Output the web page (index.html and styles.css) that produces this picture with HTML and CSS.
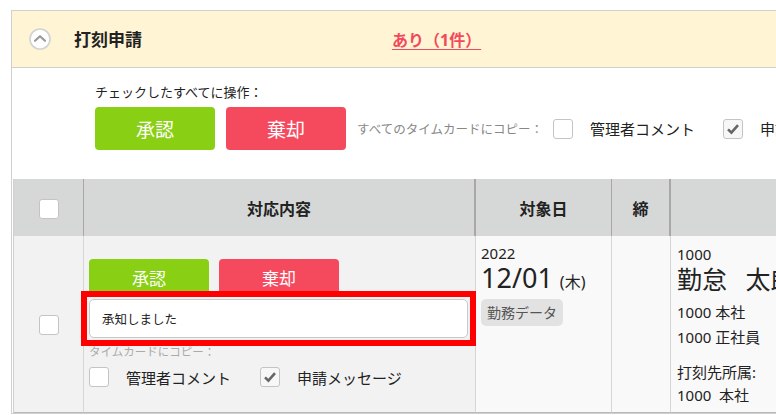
FILE: index.html
```html
<!DOCTYPE html>
<html lang="ja">
  <head>
    <meta charset="utf-8" />
    <title>打刻申請</title>
    <meta name="viewport" content="width=device-width, initial-scale=1" />
    <link rel="stylesheet" href="styles.css">
  </head>
  <body>
    <div class="panel">
      <div class="panel-head">
        <span class="toggle">
          <svg width="22" height="22" viewBox="0 0 22 22">
            <circle cx="11" cy="11" r="10" fill="#fff" stroke="#d2d2d2" stroke-width="1.6" />
            <path d="M6 12.8 L11 8.2 L16 12.8" fill="none" stroke="#9a9a9a" stroke-width="2.2" stroke-linecap="round" stroke-linejoin="round" />
          </svg>
        </span>
        <h2 class="panel-title">打刻申請</h2>
        <a class="panel-status" href="#">あり（1件）</a>
      </div>

      <div class="panel-body">
        <div class="bulk">
          <div class="bulk-label">チェックしたすべてに操作：</div>
          <div class="bulk-actions">
            <button class="btn btn-approve">承認</button>
            <button class="btn btn-reject">棄却</button>
            <span class="copy-label">すべてのタイムカードにコピー：</span>
            <label class="opt"><span class="check"></span>管理者コメント</label>
            <label class="opt">
              <span class="check is-on">
                <svg width="14" height="14" viewBox="0 0 14 14"><path d="M2 7.4 L5.4 10.6 L12 3.2" fill="none" stroke="#666" stroke-width="2.6" /></svg>
              </span>申請メッセージ
            </label>
          </div>
        </div>

        <table class="list">
          <thead>
            <tr>
              <th class="col-check"><span class="check"></span></th>
              <th class="col-action">対応内容</th>
              <th class="col-date">対象日</th>
              <th class="col-close">締</th>
              <th class="col-staff"></th>
            </tr>
          </thead>
          <tbody>
            <tr>
              <td class="col-check"><span class="check"></span></td>
              <td class="col-action">
                <div class="row-actions">
                  <button class="btn btn-sm btn-approve">承認</button>
                  <button class="btn btn-sm btn-reject">棄却</button>
                </div>
                <div class="memo">
                  <input class="memo-input" type="text" value="承知しました" />
                </div>
                <div class="copy-note">タイムカードにコピー：</div>
                <div class="row-opts">
                  <label class="opt"><span class="check"></span>管理者コメント</label>
                  <label class="opt">
                    <span class="check is-on">
                      <svg width="14" height="14" viewBox="0 0 14 14"><path d="M2 7.4 L5.4 10.6 L12 3.2" fill="none" stroke="#666" stroke-width="2.6" /></svg>
                    </span>申請メッセージ
                  </label>
                </div>
              </td>
              <td class="col-date">
                <div class="date-year">2022</div>
                <div class="date-day">12/01 <small>(木)</small></div>
                <span class="tag">勤務データ</span>
              </td>
              <td class="col-close"></td>
              <td class="col-staff">
                <div class="staff-code">1000</div>
                <div class="staff-name">勤怠 太郎</div>
                <div class="staff-affil">
                  <div>1000 本社</div>
                  <div>1000 正社員</div>
                </div>
                <div class="staff-dest">
                  <div>打刻先所属:</div>
                  <div>1000&nbsp;&nbsp;本社</div>
                </div>
              </td>
            </tr>
          </tbody>
        </table>
      </div>
    </div>
  </body>
</html>
```

FILE: styles.css
```css
* {
  box-sizing: border-box;
}
body {
  margin: 0;
  background: #fff;
  color: #222;
  font-family: "Noto Sans", "Noto Sans CJK JP", sans-serif;
  overflow: hidden;
}

.panel {
  margin: 10px 0 0 11px;
  width: 1000px;
  border: 1px solid #d0d0d0;
  border-right: 0;
}
.panel-head {
  display: flex;
  align-items: center;
  height: 57px;
  padding-left: 17px;
  background: #fff4d3;
  border-bottom: 1px solid #d0d0d0;
}
.toggle svg {
  display: block;
}
.panel-title {
  margin: 0 0 0 23px;
  width: 318px;
  font-size: 17px;
  font-weight: bold;
  line-height: 1;
}
.panel-status {
  color: #f2495c;
  font-size: 16px;
  font-weight: bold;
  text-underline-offset: 3px;
}

/* bulk toolbar */
.bulk {
  padding: 14px 0 0 83px;
}
.bulk-label {
  font-size: 13px;
  line-height: 20px;
}
.bulk-actions {
  display: flex;
  align-items: center;
  margin-top: 5px;
  white-space: nowrap;
}
.btn {
  width: 120px;
  height: 43px;
  border: 0;
  border-radius: 4px;
  color: #fff;
  font-family: inherit;
  font-size: 19px;
  padding: 0;
}
.btn + .btn {
  margin-left: 11px;
}
.btn-approve {
  background: #89cf13;
}
.btn-reject {
  background: #f5495e;
}
.copy-label {
  margin-left: 11px;
  color: #888;
  font-size: 12.5px;
}
.bulk-actions .opt {
  margin-left: 10px;
}
.bulk-actions .opt + .opt {
  margin-left: 28px;
}

.opt {
  display: flex;
  align-items: center;
  font-size: 15px;
  color: #222;
}
.opt .check {
  margin-right: 17px;
}
.check {
  display: inline-flex;
  align-items: center;
  justify-content: center;
  width: 20px;
  height: 20px;
  border: 1px solid #c4c4c4;
  border-radius: 3px;
  background: #fff;
  vertical-align: middle;
}
.check.is-on {
  background: #f7f7f7;
}
.check svg {
  display: block;
}

/* list */
.list {
  margin: 29px 0 0 1px;
  width: 998px;
  border-collapse: separate;
  border-spacing: 0;
  table-layout: fixed;
  border-left: 1px solid #d0d0d0;
}
.list th {
  height: 57px;
  padding: 0;
  background: #d6d8d7;
  border-right: 1px solid #a8a8a8;
  font-size: 16px;
  font-weight: bold;
  color: #222;
  vertical-align: middle;
}
.list th.col-action,
.list th.col-close {
  border-right-width: 2px;
}
.col-check {
  width: 70px;
}
.col-action {
  width: 392px;
}
.col-date {
  width: 136px;
}
.col-close {
  width: 59px;
}
.list td {
  height: 177px;
  padding: 0;
  background: #f9f9f9;
  border-right: 1px solid #d6d6d6;
  border-bottom: 1px solid #b8b8b8;
  vertical-align: top;
}
.list td.col-check,
.list td.col-action {
  background: #f2f2f2;
}
.list td.col-check {
  text-align: center;
  vertical-align: middle;
}

.list td.col-action {
  padding: 23px 7px 0 5px;
}
.row-actions {
  display: flex;
}
.btn-sm {
  height: 36px;
  font-size: 17px;
}
.row-actions .btn + .btn {
  margin-left: 10px;
}
.memo {
  position: relative;
  z-index: 1;
  margin: 2px -2px 0;
  padding: 2px;
  outline: 6px solid #ff0000;
}
.memo-input {
  display: block;
  width: 100%;
  height: 39px;
  padding: 0 12px;
  border: 1px solid #c9c9c9;
  border-radius: 5px;
  background: #fff;
  color: #222;
  font-family: inherit;
  font-size: 12.5px;
}
.copy-note {
  margin-top: 3px;
  font-size: 11.5px;
  line-height: 18px;
  color: #aaa;
}
.row-opts {
  display: flex;
  align-items: center;
  height: 24px;
  margin-top: 4px;
}
.row-opts .opt + .opt {
  margin-left: 29px;
}

.list td.col-date {
  padding: 8px 5px 0;
}
.date-year {
  font-size: 15px;
  line-height: 18px;
}
.date-day {
  font-size: 27px;
  line-height: 32px;
}
.date-day small {
  font-size: 16px;
}
.tag {
  display: inline-block;
  margin-top: 1px;
  height: 27px;
  padding: 0 6px;
  border-radius: 5px;
  background: #e2e2e2;
  color: #555;
  font-size: 14px;
  line-height: 27px;
}

.list td.col-staff {
  padding: 8px 6px 0;
  font-size: 15px;
}
.staff-code {
  line-height: 20px;
}
.staff-name {
  font-size: 25px;
  line-height: 30px;
  word-spacing: 12px;
  white-space: nowrap;
}
.staff-affil {
  margin-top: 6px;
  line-height: 25px;
}
.staff-dest {
  margin-top: 11px;
  line-height: 23px;
}
```
